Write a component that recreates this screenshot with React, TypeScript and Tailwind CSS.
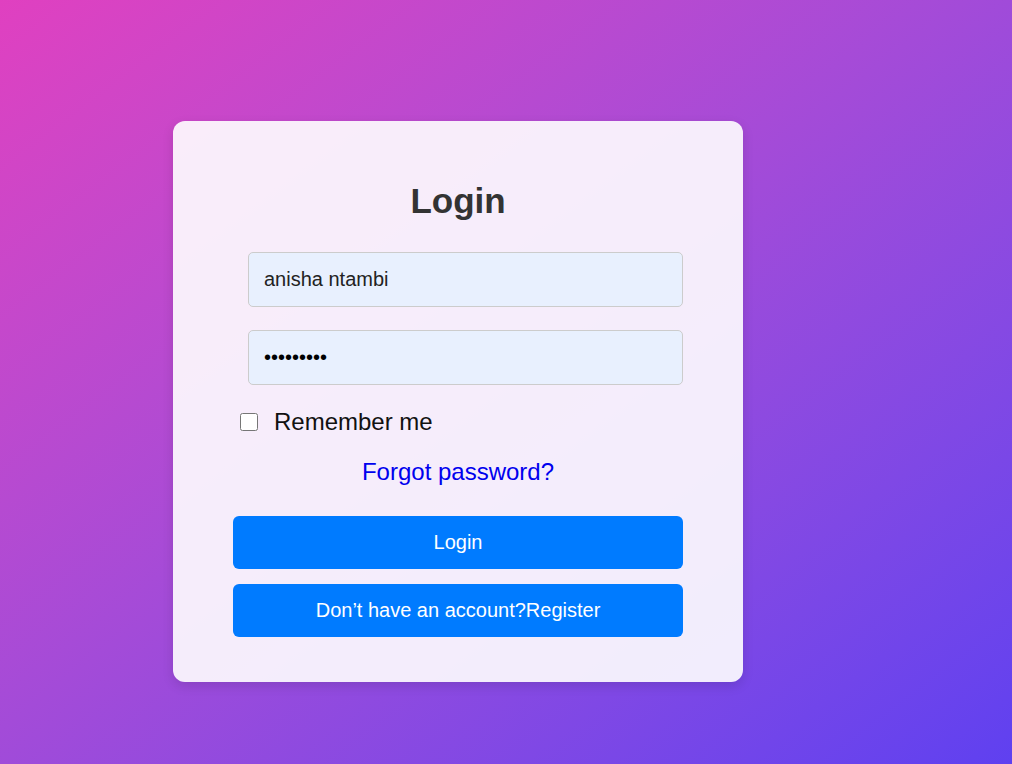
export default function App() {
  return (
    <div className="min-h-[764px] w-full bg-linear-to-br from-[#e040c0] to-[#5f40f0] pl-[173px] pt-[121px] font-['Liberation_Sans',Arial,sans-serif]">
      <div className="w-[570px] rounded-[12px] bg-white/90 px-[60px] pt-[60px] pb-[45px] shadow-[0_4px_12px_rgba(0,0,0,0.12)]">
        <h2 className="text-center text-[35px] font-bold leading-[40px] text-[#333]">Login</h2>

        <form className="mt-[31px] flex flex-col" onSubmit={e => e.preventDefault()}>
          <input
            type="text"
            defaultValue="anisha ntambi"
            className="ml-[15px] w-[435px] rounded-[5px] border border-[#ccc] bg-[#e8f0fe] px-[15px] py-[15px] text-[20px] leading-[23px] text-[#222] outline-none"
          />
          <input
            type="password"
            defaultValue="anisha123"
            className="mt-[23px] ml-[15px] w-[435px] rounded-[5px] border border-[#ccc] bg-[#e8f0fe] px-[15px] py-[15px] text-[20px] leading-[23px] text-black outline-none"
          />

          <label className="mt-[23px] flex h-[28px] items-center text-[24px] leading-[28px] text-[#111]">
            <input type="checkbox" className="m-0 ml-[7px] h-[18px] w-[18px]" />
            <span className="ml-[16px]">Remember me</span>
          </label>

          <a href="#" className="mt-[22px] text-center text-[24px] leading-[28px] text-[#0000ee]">
            Forgot password?
          </a>

          <button type="submit" className="mt-[30px] h-[53px] w-full rounded-[6px] bg-[#007bff] pb-[2px] text-[20px] text-white">
            Login
          </button>
          <button type="button" className="mt-[15px] h-[53px] w-full rounded-[6px] bg-[#007bff] pb-[2px] text-[20px] text-white">
            Don’t have an account?Register
          </button>
        </form>
      </div>
    </div>
  );
}
